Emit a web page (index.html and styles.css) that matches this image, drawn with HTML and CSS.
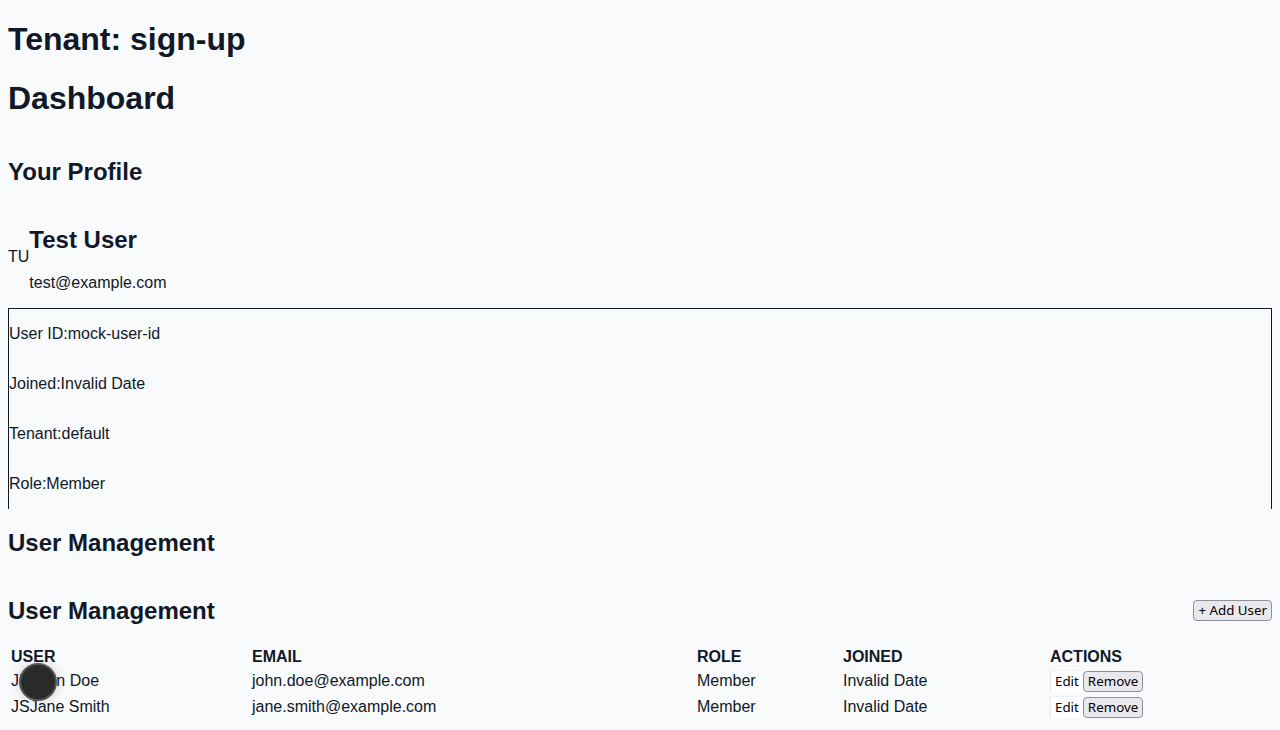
FILE: index.html
```html
<!DOCTYPE html>
<html lang="en">
<head>
<meta charset="utf-8">
<title>Dashboard</title>
<link rel="stylesheet" href="styles.css">
</head>
<body>
<h1 class="title">Tenant: sign-up</h1>
<h1 class="title">Dashboard</h1>
<section class="section">
  <h2 class="heading">Your Profile</h2>
  <div class="profile">
    <span class="avatar">TU</span>
    <div class="profile-info">
      <h2 class="heading">Test User</h2>
      <p class="email">test@example.com</p>
    </div>
  </div>
  <div class="details">
    <p class="detail"><span>User ID:</span><span>mock-user-id</span></p>
    <p class="detail"><span>Joined:</span><span>Invalid Date</span></p>
    <p class="detail"><span>Tenant:</span><span>default</span></p>
    <p class="detail"><span>Role:</span><span>Member</span></p>
  </div>
  <h2 class="heading">User Management</h2>
  <div class="um-header">
    <h2 class="heading">User Management</h2>
    <button class="btn">+ Add User</button>
  </div>
  <table class="users">
    <colgroup>
      <col class="c-user"><col class="c-email"><col class="c-role"><col class="c-joined"><col class="c-actions">
    </colgroup>
    <thead>
      <tr><th>USER</th><th>EMAIL</th><th>ROLE</th><th>JOINED</th><th>ACTIONS</th></tr>
    </thead>
    <tbody>
      <tr>
        <td><span class="initials">JD</span>John Doe</td>
        <td>john.doe@example.com</td>
        <td>Member</td>
        <td>Invalid Date</td>
        <td class="actions"><button class="btn-edit">Edit</button><button class="btn">Remove</button></td>
      </tr>
      <tr>
        <td><span class="initials">JS</span>Jane Smith</td>
        <td>jane.smith@example.com</td>
        <td>Member</td>
        <td>Invalid Date</td>
        <td class="actions"><button class="btn-edit">Edit</button><button class="btn">Remove</button></td>
      </tr>
    </tbody>
  </table>
</section>
<div class="dev-indicator"></div>
</body>
</html>
```
FILE: styles.css
```css
html, body {
  background: #f8fafc;
}
body {
  margin: 0;
  padding: 0 8px;
  font-family: "Liberation Sans", Arial, sans-serif;
  font-size: 16px;
  color: #111827;
}
.title {
  font-size: 32px;
  font-weight: bold;
  margin: 21.44px 0;
}
.section {
  display: flow-root;
}
.heading {
  font-size: 24px;
  font-weight: bold;
  margin: 19.92px 0;
}
.profile {
  display: flex;
  align-items: center;
}
.profile-info {
  display: flow-root;
}
.email {
  margin: 16px 0;
}
.details {
  display: flex;
  flex-direction: column;
  border: 1px solid #111827;
  border-bottom: none;
}
.detail {
  margin: 16px 0;
}
.um-header {
  display: flex;
  justify-content: space-between;
  align-items: center;
}
.btn {
  font-family: "Noto Sans", sans-serif;
  font-size: 13.333px;
  line-height: 17px;
  color: #000;
  background: #e9e9ed;
  border: 1px solid #8f8f9d;
  border-radius: 4px;
  padding: 1px 4px;
}
.btn-edit {
  font-family: "Noto Sans", sans-serif;
  font-size: 13.333px;
  line-height: 17px;
  color: #000;
  background: #ffffff;
  border: none;
  border-left: 1px solid #e5e7eb;
  border-top: 1px solid #f0f1f3;
  padding: 2px 4px 2px 4px;
}
.users {
  width: 100%;
  table-layout: fixed;
  border-spacing: 2px;
}
.c-user { width: 239px; }
.c-email { width: 443px; }
.c-role { width: 144px; }
.c-joined { width: 205px; }
.c-actions { width: 221px; }
.users th {
  text-align: left;
  font-weight: bold;
  padding: 1px;
}
.users td {
  padding: 1px;
  height: 22px;
  vertical-align: middle;
}
.actions {
  white-space: nowrap;
}
.dev-indicator {
  position: fixed;
  left: 19px;
  top: 663px;
  width: 34px;
  height: 34px;
  border-radius: 50%;
  background: #2a2a2a;
  border: 2px solid #555555;
  box-shadow: 0 0 12px rgba(0, 0, 0, 0.18);
}
```
